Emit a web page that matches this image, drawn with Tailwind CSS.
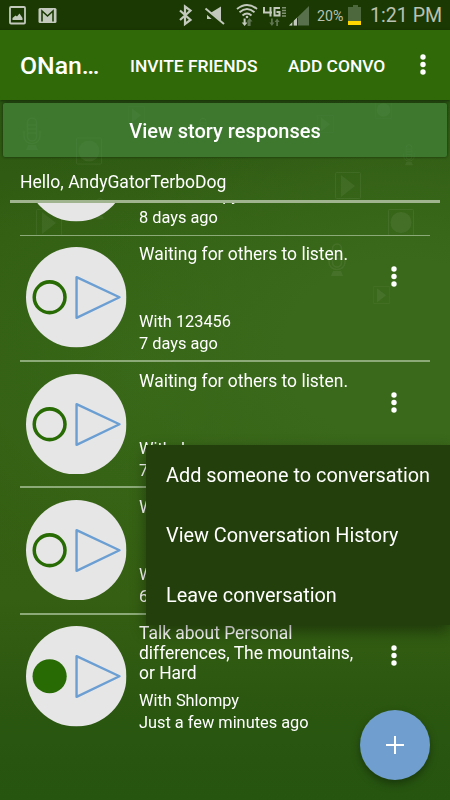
<!DOCTYPE html>
<html lang="en">
<head>
  <meta charset="UTF-8">
  <meta name="viewport" content="width=device-width, initial-scale=1.0">
  <title>Conversations</title>
  <script src="https://cdn.jsdelivr.net/npm/@tailwindcss/browser@4"></script>
</head>
<body class="bg-[#2d5a12] font-['Roboto',sans-serif] text-white">
  <!-- shared icons -->
  <svg class="hidden">
    <symbol id="dots" viewBox="0 0 6 21">
      <circle cx="3" cy="3" r="2.7" fill="#fff"/><circle cx="3" cy="10.5" r="2.7" fill="#fff"/><circle cx="3" cy="18" r="2.7" fill="#fff"/>
    </symbol>
    <symbol id="story" viewBox="0 0 100 100">
      <circle cx="50" cy="50" r="50" fill="#e6e6e6"/>
      <path d="M50.300 30v40.500L93 50z" fill="none" stroke="#6b9fd3" stroke-width="2.4" stroke-linejoin="round"/>
    </symbol>
    <symbol id="bg-play" viewBox="0 0 26 27">
      <rect x=".5" y=".5" width="25" height="26" rx="1" fill="none" stroke="#fff"/><path d="M6 3v22l14-11z" fill="#fff"/>
    </symbol>
    <symbol id="bg-rec" viewBox="0 0 26 27">
      <rect x=".5" y=".5" width="25" height="26" rx="1" fill="none" stroke="#fff"/><circle cx="13" cy="13.5" r="10.5" fill="#fff"/>
    </symbol>
    <symbol id="bg-mic" viewBox="0 0 18 34">
      <rect x="4.500" y="1" width="9" height="23" rx="4.500" fill="none" stroke="#fff" stroke-width="1.500"/>
      <path d="M5 8h8M5 12h8M5 16h8M1 14v5c0 10 16 10 16 0v-5" fill="none" stroke="#fff" stroke-width="1.500"/>
      <path d="M3 33l2-5h8l2 5z" fill="#fff"/>
    </symbol>
  </svg>

  <div class="relative flex h-[800px] w-[450px] flex-col overflow-hidden bg-[radial-gradient(ellipse_330px_260px_at_400px_350px,#3a691b_0%,#3a691b_35%,transparent_100%),radial-gradient(ellipse_260px_230px_at_150px_370px,#386818_0%,transparent_100%),linear-gradient(180deg,#2b5712_100px,#325e12_230px,#355f12_600px,#2b5710_700px,#265510_800px)]">

    <!-- faint wallpaper pictures -->
    <svg class="absolute top-0 left-0" width="450" height="400">
      <g opacity=".06">
        <use href="#bg-play" x="36" y="209" width="26" height="27"/>
        <use href="#bg-play" x="335" y="172" width="26" height="27"/>
        <use href="#bg-rec" x="388" y="209" width="26" height="27"/>
        <use href="#bg-play" x="373" y="286" width="17" height="18"/>
        <use href="#bg-mic" x="328" y="243" width="18" height="34"/>
        <use href="#bg-mic" x="92" y="198" width="16" height="22"/>
        <use href="#bg-rec" x="76" y="137" width="26" height="28"/>
        <use href="#bg-mic" x="403" y="144" width="12" height="22"/>
      </g>
    </svg>

    <!-- status bar -->
    <div class="relative flex h-[30px] shrink-0 bg-[#1b3903]">
      <svg width="317" height="30" fill="#c3cabd">
        <rect x="10" y="7" width="15" height="16.500" rx="1" fill="none" stroke="#c3cabd" stroke-width="1.800"/>
        <path d="M12.500 20v-2l3-2.500 1.500 1 2.500-3 3 4.500v2z"/>
        <rect x="38.500" y="8" width="18" height="15" rx="1.500"/>
        <path d="M42 21.500V11l5.500 5 5.500-5v10.500" fill="none" stroke="#1b3903" stroke-width="1.600"/>
        <path d="M180 10.500l10.500 9.500-5.500 4V6.500l5.500 4-10.500 9.500" fill="none" stroke="#c3cabd" stroke-width="2.200"/>
        <path d="M207 12h5l9-5.500v18l-9-5.500h-5z"/>
        <path d="M204.500 9.500l18.500 16.500" stroke="#1b3903" stroke-width="4.500"/>
        <path d="M205.500 8.500l18.500 15.500" stroke="#c3cabd" stroke-width="2"/>
        <g fill="none" stroke="#c3cabd" stroke-width="1.900">
          <path d="M237 9q10-8 20 0"/><path d="M239.500 12.300q7.500-6.500 15 0"/><path d="M242.500 15.500q4.500-4 9 0"/>
        </g>
        <circle cx="247" cy="17" r="1.300"/>
        <path d="M243.600 18.500h2v4h1.900l-2.900 3.500-2.900-3.500h1.900z"/>
        <path fill="#5f7552" d="M249.600 26h-2v-4.500h-1l3-3.500 2.900 3.500h-1.900V26z"/>
        <path d="M264 7v5.500h8M270.500 7v9.500M280 8h-5.500v7.500h5V12h-3" fill="none" stroke="#c3cabd" stroke-width="2"/>
        <path d="M282 7.800h4M282 10.500h4M282 13.200h4M282 16h4" stroke="#829374" stroke-width="1.500"/>
        <path fill="#5f7552" d="M271 18.500h1.800v4h1.600l-2.500 3.500-2.500-3.500h1.600zM276.200 26h1.800v-4h1.600l-2.500-3.500-2.500 3.500h1.600z"/>
        <path fill="#58704b" d="M289 25.500L309 6v19.500z"/>
        <path d="M289 25.500l3.500-3.400v3.400zM293.500 25.500v-4.400l3.500-3.400v7.800z"/>
        <path d="M293 18v8M297.500 18v8" stroke="#1b3903"/>
      </svg>
      <span class="w-[31px] pt-[6px] text-[14.2px] leading-[20px] whitespace-nowrap text-[#b9c1b2]">20%</span>
      <svg width="22" height="30"><path d="M5 5h5v2h3v18H0V7h5z" fill="#4e683d"/><path d="M0 21h13v4H0z" fill="#ffd700"/></svg>
      <span class="pt-[4px] text-[19.600px] leading-[24px] whitespace-nowrap text-[#b9c1b2]">1:21 PM</span>
    </div>

    <!-- app bar -->
    <header class="relative flex h-[70px] shrink-0 items-center bg-[#306a08] pt-[2px] pl-5 font-medium shadow-[0_1px_3px_rgba(0,0,0,0.5)]">
      <h1 class="w-[110px] text-[24.800px] whitespace-nowrap">ONan…</h1>
      <a class="w-[158px] text-[17.400px] whitespace-nowrap">INVITE FRIENDS</a>
      <a class="w-[131.500px] text-[17.400px] whitespace-nowrap">ADD CONVO</a>
      <svg class="mb-[3px] h-[21px] w-[6px]"><use href="#dots"/></svg>
    </header>

    <button class="relative mx-[3px] mt-[3px] h-[54px] shrink-0 rounded-xs bg-[#3d782e] pt-[2px] text-[20px] font-medium shadow-[0_0_3px_rgba(0,0,0,0.55)]">
      <svg class="absolute top-0 left-0" width="444" height="54">
        <g opacity=".028">
          <use href="#bg-rec" x="73" y="34" width="26" height="28"/>
          <use href="#bg-play" x="125" y="3" width="17" height="18"/>
          <use href="#bg-play" x="314" y="12" width="17" height="18"/>
          <use href="#bg-rec" x="372" y="-2" width="17" height="18"/>
          <use href="#bg-mic" x="20" y="14" width="18" height="34"/>
          <use href="#bg-mic" x="194" y="8" width="12" height="36"/>
          <use href="#bg-mic" x="400" y="41" width="12" height="22"/>
        </g>
      </svg>
      <span class="relative">View story responses</span>
    </button>

    <div class="relative mx-[10px] flex h-[46px] shrink-0 items-center border-b-[3px] border-[#a0b58f] pt-[8px] pl-[10px] text-[17.550px]">Hello, AndyGatorTerboDog</div>

    <!-- conversations, scrolled so the first row is partly hidden -->
    <main class="relative h-[597px] shrink-0 overflow-hidden px-5">
      <div class="-mt-[93.700px] flex h-[126.300px] border-b-[1.500px] border-[#8caa78] pt-[11.700px] pl-[6px]">
        <svg class="h-[100.500px] w-[100.500px] shrink-0"><use href="#story"/></svg>
        <div class="ml-[12.500px] flex h-[108px] w-[222px] flex-col justify-end text-[16.350px] leading-[22px]">
          <p>With Shlompy</p>
          <p>8 days ago</p>
        </div>
      </div>

      <div class="flex h-[126.300px] border-b-2 border-[#8caa78] pt-[11.700px] pl-[6px]">
        <svg class="h-[100.500px] w-[100.500px] shrink-0" viewBox="0 0 100 100"><use href="#story"/><circle cx="23.500" cy="50" r="15.300" fill="none" stroke="#286b04" stroke-width="3.500"/></svg>
        <div class="ml-[12.500px] flex h-[108px] w-[222px] flex-col text-[16.350px] leading-[22px]">
          <p class="-mt-[3px] mb-auto text-[17.450px] leading-[20px]">Waiting for others to listen.</p>
          <p>With 123456</p>
          <p>7 days ago</p>
        </div>
        <svg class="mt-[18.500px] ml-[29.500px] h-[21px] w-[6px]"><use href="#dots"/></svg>
      </div>

      <div class="flex h-[126.300px] border-b-2 border-[#8caa78] pt-[11.700px] pl-[6px]">
        <svg class="h-[100.500px] w-[100.500px] shrink-0" viewBox="0 0 100 100"><use href="#story"/><circle cx="23.500" cy="50" r="15.300" fill="none" stroke="#286b04" stroke-width="3.500"/></svg>
        <div class="ml-[12.500px] flex h-[108px] w-[222px] flex-col text-[16.350px] leading-[22px]">
          <p class="-mt-[3px] mb-auto text-[17.450px] leading-[20px]">Waiting for others to listen.</p>
          <p>With Jmom</p>
          <p>7 days ago</p>
        </div>
        <svg class="mt-[18.500px] ml-[29.500px] h-[21px] w-[6px]"><use href="#dots"/></svg>
      </div>

      <div class="flex h-[126.300px] border-b-2 border-[#8caa78] pt-[11.700px] pl-[6px]">
        <svg class="h-[100.500px] w-[100.500px] shrink-0" viewBox="0 0 100 100"><use href="#story"/><circle cx="23.500" cy="50" r="15.300" fill="none" stroke="#286b04" stroke-width="3.500"/></svg>
        <div class="ml-[12.500px] flex h-[108px] w-[222px] flex-col text-[16.350px] leading-[22px]">
          <p class="-mt-[3px] mb-auto text-[17.450px] leading-[20px]">Waiting for others to listen.</p>
          <p>With Jmom</p>
          <p>6 days ago</p>
        </div>
      </div>

      <div class="flex h-[126.300px] pt-[11.700px] pl-[6px]">
        <svg class="h-[100.500px] w-[100.500px] shrink-0" viewBox="0 0 100 100"><use href="#story"/><circle cx="23.500" cy="50" r="17" fill="#286b04"/></svg>
        <div class="ml-[12.500px] flex h-[108px] w-[222px] flex-col text-[16.350px] leading-[22px]">
          <p class="-mt-[3px] mb-auto text-[17.450px] leading-[20px]">Talk about Personal<br>differences, The mountains,<br>or Hard</p>
          <p>With Shlompy</p>
          <p>Just a few minutes ago</p>
        </div>
        <svg class="mt-[18.500px] ml-[29.500px] h-[21px] w-[6px]"><use href="#dots"/></svg>
      </div>
    </main>

    <!-- popup menu -->
    <ul class="absolute top-[445px] left-[146px] w-[304px] bg-[#233f0c] pt-px text-[19.850px] shadow-[0_6px_14px_rgba(0,0,0,0.4)]">
      <li class="flex h-[60px] items-center pl-5 whitespace-nowrap">Add someone to conversation</li>
      <li class="flex h-[60px] items-center pl-5 whitespace-nowrap">View Conversation History</li>
      <li class="flex h-[59px] items-center pl-5 whitespace-nowrap">Leave conversation</li>
    </ul>

    <button class="absolute top-[710px] left-[360px] flex size-[70px] items-center justify-center rounded-full bg-[#709fcf] shadow-[0_4px_8px_rgba(0,0,0,0.35)]">
      <svg width="18" height="18" stroke="#fff" stroke-width="2"><path d="M9 0v18M0 9h18"/></svg>
    </button>
  </div>
</body>
</html>
